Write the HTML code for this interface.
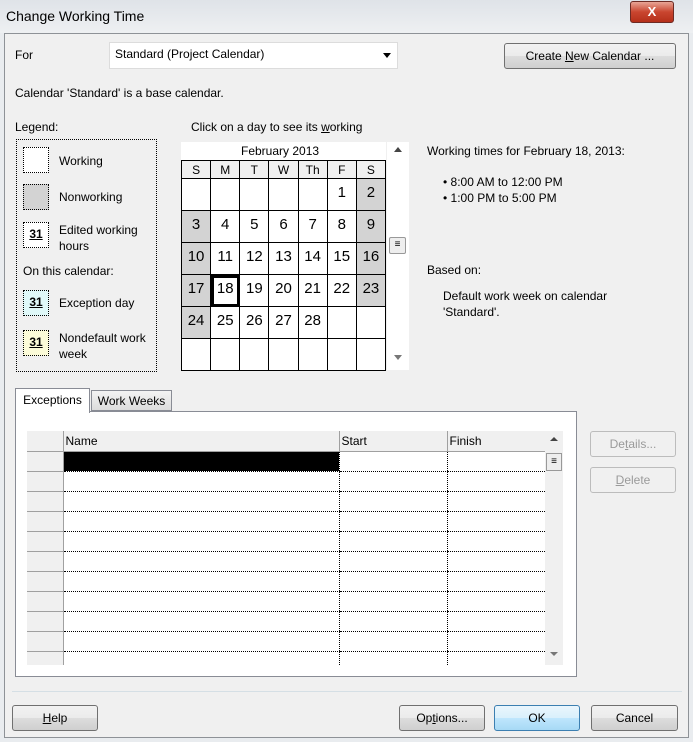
<!DOCTYPE html><html><head><style>
body{margin:0;width:693px;height:742px;background:#e9ecef;font-family:"Liberation Sans",sans-serif;font-size:12px;color:#000;position:relative;overflow:hidden}
.a{position:absolute}
.btn{position:absolute;border:1px solid #707070;border-radius:3px;background:linear-gradient(#f2f2f2,#ebebeb 50%,#dddddd 51%,#cfcfcf);text-align:center;box-sizing:border-box;font-size:12px}
.dis{border-color:#bcbcbc;background:#f0f0f0;color:#9a9a9a}
.cal{table-layout:fixed;width:205px;border-collapse:collapse;background:#fff}
.cal td{border:1px solid #000;height:32px;padding:0;text-align:center;font-size:15px;vertical-align:top;padding-top:5px;box-sizing:border-box}
.cal th{border:1px solid #000;height:17px;font-weight:normal;font-size:12px;background:#f0f0f0;padding:0}
.g{background:#d3d3d3}
.lg{position:absolute;left:23px;width:26px;height:26px;border:1px dotted #000;box-sizing:border-box;font-weight:bold;font-size:12px;text-align:center;text-decoration:underline;line-height:22px}
.ex{table-layout:fixed;border-collapse:collapse;width:518px}
.ex td{height:20px;padding:0;box-sizing:border-box;border-bottom:1px dotted #000;border-left:1px dotted #000}
.ex td.h{background:#f0f0f0;border-bottom:1px solid #a0a0a0;border-left:none;border-right:1px solid #a0a0a0}
.ex tr.hd td{background:#f0f0f0;border-bottom:1px solid #a0a0a0;border-left:1px solid #a0a0a0;padding-left:2px;vertical-align:middle}
</style></head><body>
<div class="a" style="left:0;top:0;width:693px;height:33px;background:linear-gradient(#dfe3e8,#eef0f2)"></div>
<div class="a" style="left:6px;top:8px;font-size:14px">Change Working Time</div>
<div class="a" style="left:630px;top:1px;width:42px;height:20px;border:1px solid #6d2b24;border-radius:3px;background:linear-gradient(#e8a595,#c9452f 50%,#b5301a);color:#fff;font-weight:bold;text-align:center;line-height:20px;font-size:13px">X</div>
<div class="a" style="left:4px;top:33px;width:683px;height:703px;background:#f0f0f0;border:1px solid #8e9297"></div>
<div class="a" style="left:15px;top:48px">For</div>
<div class="a" style="left:109px;top:42px;width:289px;height:27px;background:#fff;border:1px solid #dcdcdc;box-sizing:border-box"></div>
<div class="a" style="left:115px;top:47px">Standard (Project Calendar)</div>
<div class="a" style="left:383px;top:53px;width:0;height:0;border-left:4px solid transparent;border-right:4px solid transparent;border-top:5px solid #000"></div>
<div class="btn" style="left:504px;top:43px;width:172px;height:26px;line-height:24px">Create <u>N</u>ew Calendar ...</div>
<div class="a" style="left:15px;top:86px">Calendar 'Standard' is a base calendar.</div>
<div class="a" style="left:15px;top:120px">Legend:</div>
<div class="a" style="left:191px;top:120px">Click on a day to see its <u>w</u>orking</div>
<div class="a" style="left:16px;top:139px;width:141px;height:233px;border:1px dotted #000;box-sizing:border-box"></div>
<div class="lg" style="top:147px;background:#fff"></div><div class="a" style="left:59px;top:154px">Working</div>
<div class="lg" style="top:184px;background:#d3d3d3"></div><div class="a" style="left:59px;top:190px">Nonworking</div>
<div class="lg" style="top:222px;background:#fff">31</div><div class="a" style="left:59px;top:222px;line-height:16px">Edited working<br>hours</div>
<div class="a" style="left:23px;top:264px">On this calendar:</div>
<div class="lg" style="top:290px;background:#dff8f8">31</div><div class="a" style="left:59px;top:296px">Exception day</div>
<div class="lg" style="top:330px;background:#fbfbd8">31</div><div class="a" style="left:59px;top:330px;line-height:16px">Nondefault work<br>week</div>
<div class="a" style="left:181px;top:142px;width:205px;height:20px;background:#fff"></div>
<div class="a" style="left:241px;top:144px">February 2013</div>
<div class="a" style="left:387px;top:142px;width:22px;height:228px;background:#fff"></div>
<div class="a" style="left:394px;top:147px;border-left:4px solid transparent;border-right:4px solid transparent;border-bottom:5px solid #444"></div>
<div class="a" style="left:394px;top:355px;border-left:4px solid transparent;border-right:4px solid transparent;border-top:5px solid #777"></div>
<div class="a" style="left:389px;top:237px;width:17px;height:17px;border:1px solid #999;border-radius:2px;background:#eee;box-sizing:border-box;font-size:10px;text-align:center;line-height:14px">≡</div>
<table class="cal a" style="left:181px;top:160px">
<tr><th>S</th><th>M</th><th>T</th><th>W</th><th>Th</th><th>F</th><th>S</th></tr>
<tr><td></td><td></td><td></td><td></td><td></td><td>1</td><td class="g">2</td></tr>
<tr><td class="g">3</td><td>4</td><td>5</td><td>6</td><td>7</td><td>8</td><td class="g">9</td></tr>
<tr><td class="g">10</td><td>11</td><td>12</td><td>13</td><td>14</td><td>15</td><td class="g">16</td></tr>
<tr><td class="g">17</td><td style="outline:3px solid #000;outline-offset:-3px">18</td><td>19</td><td>20</td><td>21</td><td>22</td><td class="g">23</td></tr>
<tr><td class="g">24</td><td>25</td><td>26</td><td>27</td><td>28</td><td></td><td></td></tr>
<tr><td></td><td></td><td></td><td></td><td></td><td></td><td></td></tr>
</table>
<div class="a" style="left:427px;top:144px">Working times for February 18, 2013:</div>
<div class="a" style="left:443px;top:174px;line-height:16px">• 8:00 AM to 12:00 PM<br>• 1:00 PM to 5:00 PM</div>
<div class="a" style="left:427px;top:263px">Based on:</div>
<div class="a" style="left:443px;top:288px;line-height:16px">Default work week on calendar<br>'Standard'.</div>
<div class="a" style="left:15px;top:411px;width:562px;height:266px;background:#fff;border:1px solid #898c95;box-sizing:border-box"></div>
<div class="a" style="left:15px;top:388px;width:75px;height:25px;background:#fff;border:1px solid #898c95;border-bottom:none;box-sizing:border-box;text-align:center;line-height:22px">Exceptions</div>
<div class="a" style="left:91px;top:390px;width:81px;height:21px;background:linear-gradient(#f3f3f3,#dcdcdc);border:1px solid #898c95;box-sizing:border-box;text-align:center;line-height:20px">Work Weeks</div>
<div class="a" style="left:27px;top:431px;width:518px;height:234px;background:#fff;overflow:hidden">
<table class="ex">
<colgroup><col style="width:36px"><col style="width:276px"><col style="width:108px"><col></colgroup>
<tr class="hd"><td style="border-left:none;border-right:1px solid #a0a0a0"></td><td>Name</td><td>Start</td><td>Finish</td></tr>
<tr><td class="h"></td><td style="background:#000"></td><td></td><td></td></tr>
<tr><td class="h"></td><td></td><td></td><td></td></tr>
<tr><td class="h"></td><td></td><td></td><td></td></tr>
<tr><td class="h"></td><td></td><td></td><td></td></tr>
<tr><td class="h"></td><td></td><td></td><td></td></tr>
<tr><td class="h"></td><td></td><td></td><td></td></tr>
<tr><td class="h"></td><td></td><td></td><td></td></tr>
<tr><td class="h"></td><td></td><td></td><td></td></tr>
<tr><td class="h"></td><td></td><td></td><td></td></tr>
<tr><td class="h"></td><td></td><td></td><td></td></tr>
<tr><td class="h"></td><td></td><td></td><td></td></tr>
<tr><td class="h"></td><td></td><td></td><td></td></tr>
</table>
</div>
<div class="a" style="left:545px;top:431px;width:18px;height:234px;background:#f0f0f0"></div>
<div class="a" style="left:550px;top:437px;border-left:4px solid transparent;border-right:4px solid transparent;border-bottom:4px solid #444"></div>
<div class="a" style="left:550px;top:652px;border-left:4px solid transparent;border-right:4px solid transparent;border-top:4px solid #777"></div>
<div class="a" style="left:546px;top:453px;width:16px;height:18px;border:1px solid #999;background:#eee;box-sizing:border-box;font-size:10px;text-align:center;line-height:15px">≡</div>
<div class="btn dis" style="left:590px;top:431px;width:86px;height:26px;line-height:24px">De<u>t</u>ails...</div>
<div class="btn dis" style="left:590px;top:467px;width:86px;height:26px;line-height:24px"><u>D</u>elete</div>
<div class="a" style="left:12px;top:691px;width:670px;height:1px;background:#d5dfe5"></div>
<div class="btn" style="left:12px;top:705px;width:86px;height:26px;line-height:24px"><u>H</u>elp</div>
<div class="btn" style="left:399px;top:705px;width:86px;height:26px;line-height:24px">Op<u>t</u>ions...</div>
<div class="btn" style="left:494px;top:705px;width:86px;height:26px;line-height:24px;border-color:#3c7fb1;background:linear-gradient(#eaf6fd,#d9f0fc 50%,#bee6fd 51%,#a7d9f5)">OK</div>
<div class="btn" style="left:591px;top:705px;width:87px;height:26px;line-height:24px">Cancel</div>
</body></html>
